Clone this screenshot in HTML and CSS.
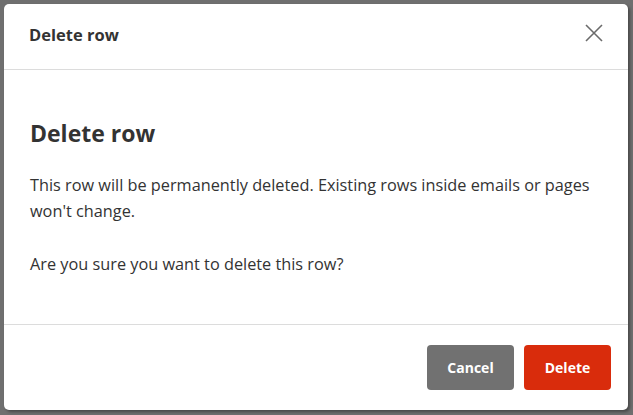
FILE: index.html
```html
<!DOCTYPE html>
<html>
<head>
<meta charset="utf-8">
<link rel="stylesheet" href="styles.css">
</head>
<body>
<div class="overlay">
  <div class="dialog">
    <div class="dialog-header">
      <span class="header-title">Delete row</span>
      <button class="close-btn" aria-label="Close">
        <svg width="18" height="18" viewBox="0 0 18 18"><path d="M1 1 L17 17 M17 1 L1 17" stroke="#6b6b6b" stroke-width="1.6" fill="none"/></svg>
      </button>
    </div>
    <div class="dialog-body">
      <h2 class="body-title">Delete row</h2>
      <p class="body-text">This row will be permanently deleted. Existing rows inside emails or pages won't change.</p>
      <p class="body-text">Are you sure you want to delete this row?</p>
    </div>
    <div class="dialog-footer">
      <button class="btn btn-cancel">Cancel</button>
      <button class="btn btn-delete">Delete</button>
    </div>
  </div>
</div>
</body>
</html>
```
FILE: styles.css
```css
html, body {
  margin: 0;
  padding: 0;
  height: 100%;
}
body {
  background: #6f6f6f;
  font-family: "Open Sans", "Noto Sans", sans-serif;
  color: #333;
}
.overlay {
  padding: 4px 5px 5px 4px;
  height: 100%;
  box-sizing: border-box;
}
.dialog {
  background: #fff;
  border-radius: 5px;
  height: 100%;
  display: flex;
  flex-direction: column;
  box-shadow: 2px 2px 3px rgba(0,0,0,0.35);
}
.dialog-header {
  height: 66px;
  border-bottom: 1px solid #dcdcdc;
  display: flex;
  align-items: center;
  justify-content: space-between;
  padding: 0 25px 0 25px;
  box-sizing: border-box;
  flex: none;
}
.header-title {
  font-size: 16.5px;
  font-weight: 700;
  color: #333;
  margin-top: -4px;
}
.close-btn {
  background: none;
  border: 0;
  padding: 0;
  width: 18px;
  height: 18px;
  cursor: pointer;
  display: flex;
  margin-top: -8px;
}
.dialog-body {
  flex: 1;
  padding: 48px 26px 0 26px;
  border-bottom: 1px solid #dcdcdc;
}
.body-title {
  margin: 0 0 24px 0;
  font-size: 23px;
  font-weight: 700;
  color: #333;
  line-height: 30px;
}
.body-text {
  margin: 0 0 27px 0;
  font-size: 16.3px;
  line-height: 26px;
  color: #333;
}
.dialog-footer {
  height: 85px;
  flex: none;
  display: flex;
  justify-content: flex-end;
  align-items: center;
  gap: 10px;
  padding: 0 17px 0 0;
  box-sizing: border-box;
}
.btn {
  border: 0;
  border-radius: 4px;
  height: 45px;
  width: 87px;
  color: #fff;
  font-family: "Open Sans", "Noto Sans", sans-serif;
  font-size: 14px;
  font-weight: 700;
  cursor: pointer;
}
.btn-cancel {
  background: #717171;
}
.btn-delete {
  background: #d92c0c;
}
```
